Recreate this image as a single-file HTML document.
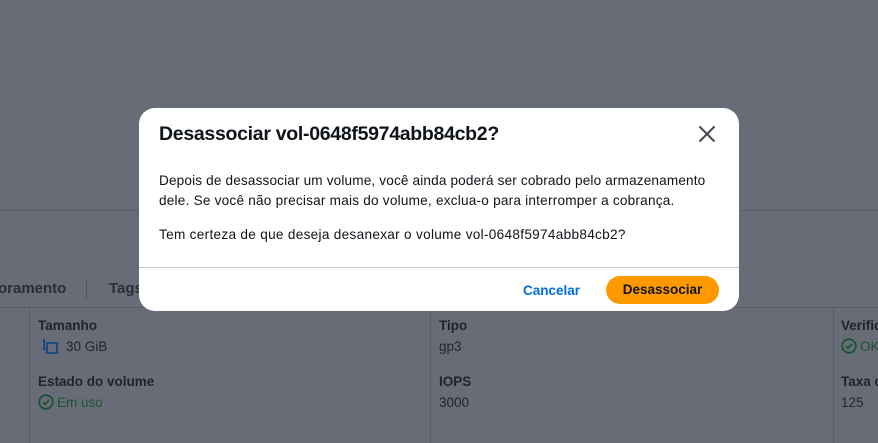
<!DOCTYPE html>
<html><head><meta charset="utf-8"><style>
*{margin:0;padding:0;box-sizing:border-box}
body{width:878px;height:443px;overflow:hidden;background:#686c76;font-family:"Liberation Sans",sans-serif;position:relative}
.a{position:absolute;white-space:nowrap}
.hl{position:absolute;left:0;width:878px;height:1px;background:#5a5d67}
.vl{position:absolute;top:307px;width:1px;height:136px;background:#5a5d67}
.lbl{font-weight:bold;font-size:13.5px;color:#1f232b}
.val{font-size:13.5px;color:#22262e}
.grn{color:#1b5434}
.modal{position:absolute;left:139px;top:108px;width:600px;height:203px;background:#fff;border-radius:16px}
</style></head><body>
<div class="hl" style="top:210px"></div>
<div class="hl" style="top:307px"></div>
<div class="vl" style="left:29px"></div>
<div class="vl" style="left:430px"></div>
<div class="vl" style="left:833px"></div>
<div class="a" style="left:-2px;top:280px;font-weight:bold;font-size:15px;color:#2a2e36">oramento</div>
<div class="a" style="left:86px;top:279px;width:1px;height:20px;background:#555962"></div>
<div class="a" style="left:109px;top:280px;font-weight:bold;font-size:15px;color:#2a2e36">Tags</div>
<div class="a lbl" style="left:38px;top:318px">Tamanho</div>
<svg class="a" style="left:41px;top:338px" width="18" height="16" viewBox="0 0 18 16"><path d="M3 1V11H5" fill="none" stroke="#1c4a84" stroke-width="2"/><rect x="6" y="5" width="10" height="10" fill="none" stroke="#1c4a84" stroke-width="2"/></svg>
<div class="a val" style="left:66px;top:339px">30 GiB</div>
<div class="a lbl" style="left:38px;top:374px">Estado do volume</div>
<svg class="a" style="left:38px;top:394px" width="16" height="16" viewBox="0 0 16 16"><circle cx="8" cy="8" r="6.8" fill="none" stroke="#1b5434" stroke-width="1.8"/><path d="M5 8.3l2 2 4-4.3" fill="none" stroke="#1b5434" stroke-width="1.8"/></svg>
<div class="a val grn" style="left:57px;top:395px">Em uso</div>
<div class="a lbl" style="left:439px;top:318px">Tipo</div>
<div class="a val" style="left:439px;top:339px">gp3</div>
<div class="a lbl" style="left:439px;top:374px">IOPS</div>
<div class="a val" style="left:439px;top:395px">3000</div>
<div class="a lbl" style="left:841px;top:318px">Verific</div>
<svg class="a" style="left:841px;top:338px" width="16" height="16" viewBox="0 0 16 16"><circle cx="8" cy="8" r="6.8" fill="none" stroke="#1b5434" stroke-width="1.8"/><path d="M5 8.3l2 2 4-4.3" fill="none" stroke="#1b5434" stroke-width="1.8"/></svg>
<div class="a val grn" style="left:860px;top:339px">OK</div>
<div class="a lbl" style="left:841px;top:374px">Taxa d</div>
<div class="a val" style="left:841px;top:395px">125</div>

<div class="modal">
<div class="a" style="left:20px;top:15px;font-weight:bold;font-size:19.5px;color:#0f141a;letter-spacing:-0.3px">Desassociar vol-0648f5974abb84cb2?</div>
<svg class="a" style="left:559px;top:17px" width="18" height="18" viewBox="0 0 18 18"><path d="M1.5 1.5L16.5 16.5M16.5 1.5L1.5 16.5" stroke="#424650" stroke-width="2"/></svg>
<div class="a" style="left:20px;top:65px;font-size:13.6px;color:#0f141a;letter-spacing:0.15px">Depois de desassociar um volume, você ainda poderá ser cobrado pelo armazenamento</div>
<div class="a" style="left:20px;top:85px;font-size:13.6px;color:#0f141a;letter-spacing:0.22px">dele. Se você não precisar mais do volume, exclua-o para interromper a cobrança.</div>
<div class="a" style="left:20px;top:119px;font-size:13.6px;color:#0f141a;letter-spacing:0.3px">Tem certeza de que deseja desanexar o volume vol-0648f5974abb84cb2?</div>
<div class="a" style="left:0;top:159px;width:600px;height:1px;background:#c6c6cd"></div>
<div class="a" style="left:384px;top:175px;font-weight:bold;font-size:13.5px;color:#006ce0">Cancelar</div>
<div class="a" style="left:467px;top:168px;width:113px;height:28px;border-radius:14px;background:#ff9900;color:#0f141a;font-weight:bold;font-size:13.5px;text-align:center;line-height:28px">Desassociar</div>
</div>
</body></html>
